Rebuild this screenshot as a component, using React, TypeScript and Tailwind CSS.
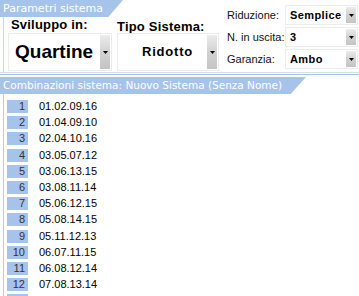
import React from 'react';

const rows = [
  '01.02.09.16',
  '01.04.09.10',
  '02.04.10.16',
  '03.05.07.12',
  '03.06.13.15',
  '03.08.11.14',
  '05.06.12.15',
  '05.08.14.15',
  '05.11.12.13',
  '06.07.11.15',
  '06.08.12.14',
  '07.08.13.14',
];

function DropButton({ className = '' }: { className?: string }) {
  return (
    <div
      className={`flex w-[10px] items-center justify-center bg-gradient-to-b from-[#ececec] via-[#d2d2d2] to-[#c4c4c4] ${className}`}
    >
      <svg width="5" height="3" viewBox="0 0 5 3">
        <polygon points="0,0 5,0 2.5,3" fill="#000" />
      </svg>
    </div>
  );
}

function SmallCombo({ value }: { value: string }) {
  return (
    <div className="flex h-[20px] w-[73px] items-stretch border border-[#ececec] bg-white py-[1px] pr-[1px]">
      <div className="flex-1 pl-[4px] text-[11px] font-bold leading-[17px] tracking-[0.4px] text-black">{value}</div>
      <DropButton />
    </div>
  );
}

export default function App() {
  return (
    <div className="h-[296px] w-[359px] overflow-hidden bg-white font-['Liberation_Sans',Arial,sans-serif] text-black">
      {/* Parametri sistema */}
      <div className="flex h-[73px] border-b border-[#d4dfee]">
        <div className="flex w-[222px] flex-col">
          <div
            className="h-[17px] w-[123px] bg-[#a6c3ec] pl-[3px] font-['DejaVu_Sans',sans-serif] text-[11px] leading-[17px] text-white [clip-path:polygon(0_0,100%_0,88%_100%,0_100%)]"
          >
            Parametri sistema
          </div>
          <div className="ml-[3px] flex flex-1 gap-[5px] border-l border-[#c9d7ea] pl-[4px]">
            <div className="flex w-[104px] flex-col">
              <div className="h-[16px] pl-[3px] text-[13px] font-bold leading-[15px] tracking-[0.2px]">Sviluppo in:</div>
              <div className="flex h-[38px] border border-[#ececec] bg-white py-[1px] pr-[1px]">
                <div className="flex flex-1 items-center pl-[6px] text-[19px] font-bold">Quartine</div>
                <DropButton />
              </div>
            </div>
            <div className="flex w-[102px] flex-col">
              <div className="h-[16px] text-[13px] font-bold leading-[19px] tracking-[0.2px]">Tipo Sistema:</div>
              <div className="flex h-[38px] border border-[#ececec] bg-white py-[1px] pr-[1px]">
                <div className="flex flex-1 items-center justify-center pl-[10px] text-[13px] font-bold tracking-[0.8px]">
                  Ridotto
                </div>
                <DropButton />
              </div>
            </div>
          </div>
        </div>
        <div className="flex flex-1 flex-col gap-[2px] pt-[5px]">
          {[
            ['Riduzione:', 'Semplice'],
            ['N. in uscita:', '3'],
            ['Garanzia:', 'Ambo'],
          ].map(([label, value]) => (
            <div key={label} className="flex items-center">
              <div className="w-[63px] pl-[5px] text-[11px] leading-[20px] text-[#111]">{label}</div>
              <SmallCombo value={value} />
            </div>
          ))}
        </div>
      </div>

      {/* Combinazioni sistema */}
      <div className="mt-[1px] h-[1px] bg-[#a6c3ec]" />
      <div className="mt-[2px] flex">
        <div className="h-[17px] w-[306px] bg-[#a6c3ec] pl-[3px] font-['DejaVu_Sans',sans-serif] text-[10.5px] leading-[17px] text-white [clip-path:polygon(0_0,100%_0,95%_100%,0_100%)]">
          Combinazioni sistema: Nuovo Sistema (Senza Nome)
        </div>
      </div>
      <div className="ml-[3px] flex flex-col border-l border-[#b8cde9] pt-[6px]">
        {rows.concat(['']).map((r, i) => (
          <div key={i} className="flex h-[16.2px] items-start">
            <div className="ml-[3px] h-[13px] w-[21px] bg-[#a6c3ec] pr-[3px] text-right text-[11px] leading-[13px] text-[#333]">
              {r ? i + 1 : ''}
            </div>
            <div className="pl-[11px] text-[11px] leading-[13px] text-black">{r}</div>
          </div>
        ))}
      </div>
    </div>
  );
}
